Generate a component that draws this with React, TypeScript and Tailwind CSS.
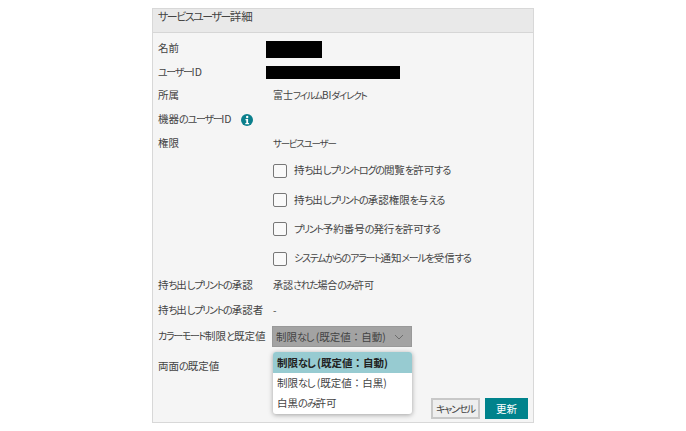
const font = "font-['Noto_Sans_CJK_JP','Noto_Sans',sans-serif] [font-feature-settings:'palt']";

function T({ children }: { children: string }) {
  const parts = children.split(/([\u30A0-\u30FF]+|[\u3040-\u309F]+|：)/).filter(Boolean);
  return (
    <>
      {parts.map((p, i) => {
        if (/^[\u30A0-\u30FF]/.test(p)) return <span key={i} className="text-[0.95em] tracking-[-0.13em]">{p}</span>;
        if (/^[\u3040-\u309F]/.test(p)) return <span key={i} className="text-[0.97em] tracking-[-0.11em]">{p}</span>;
        if (p === "：") return <span key={i} className="[font-feature-settings:normal]">{p}</span>;
        return <span key={i}>{p}</span>;
      })}
    </>
  );
}

function Row({ label, h, children }: { label: string; h: string; children?: React.ReactNode }) {
  return (
    <div className={`flex items-center ${h}`}>
      <div className="w-[115px] shrink-0 text-[10.5px] text-[#444] whitespace-nowrap -mt-[2px]"><T>{label}</T></div>
      <div className="flex items-center text-[10px] text-[#444] whitespace-nowrap">{children}</div>
    </div>
  );
}

function Check({ text, h }: { text: string; h: string }) {
  return (
    <div className={`flex items-center pl-[115px] ${h}`}>
      <span className="w-[14px] h-[14px] mr-[7px] rounded-[2px] border border-[#777] bg-[#f9f9f9] -mt-px" />
      <span className="text-[10.5px] text-[#444] whitespace-nowrap -mt-[2px]"><T>{text}</T></span>
    </div>
  );
}

export default function App() {
  return (
    <div className={`${font} w-[686px] h-[431px] bg-white overflow-hidden pt-2`}>
      <div className="relative mx-auto w-[382px] h-[415px] bg-[#f5f5f5] border border-[#d8d8d8] flex flex-col">
        <div className="h-[24px] shrink-0 bg-[#e9e9e9] border-b border-[#d6d6d6] pl-[5px] text-[11.5px] leading-[15px] text-[#444]">
          <T>サービスユーザー詳細</T>
        </div>
        <div className="pl-[5px] pt-[4px] flex flex-col">
          <Row label="名前" h="h-[24px]">
            <span className="w-[56px] h-[17px] bg-black -ml-[7px]" />
          </Row>
          <Row label="ユーザーID" h="h-[23px]">
            <span className="w-[134px] h-[13px] bg-black -ml-[7px]" />
          </Row>
          <Row label="所属" h="h-[24px]"><span className="-mt-[2px]"><T>富士フイルムBIダイレクト</T></span></Row>
          <div className="flex items-center h-[24px]">
            <span className="w-[83px] text-[10.5px] text-[#444] whitespace-nowrap -mt-[2px]"><T>機器のユーザーID</T></span>
            <svg className="w-[12px] h-[12px]" viewBox="0 0 12 12">
              <circle cx="6" cy="6" r="6" fill="#0a7f8c" />
              <circle cx="6.2" cy="3" r="1.2" fill="#fff" />
              <path d="M4.5 5h2.6v4h1v1.2H4.3V9h1V6.2h-.8z" fill="#fff" />
            </svg>
          </div>
          <Row label="権限" h="h-[24px]"><span className="-mt-[2px]"><T>サービスユーザー</T></span></Row>
          <Check text="持ち出しプリントログの閲覧を許可する" h="h-[30px]" />
          <Check text="持ち出しプリントの承認権限を与える" h="h-[29px]" />
          <Check text="プリント予約番号の発行を許可する" h="h-[29px]" />
          <Check text="システムからのアラート通知メールを受信する" h="h-[30px]" />
          <Row label="持ち出しプリントの承認" h="h-[24px]"><span className="-mt-[2px]"><T>承認された場合のみ許可</T></span></Row>
          <Row label="持ち出しプリントの承認者" h="h-[25px]"><span className="-mt-[2px]">-</span></Row>
          <Row label="カラーモード制限と既定値" h="h-[27px]">
            <div className="w-[140px] h-[21px] -ml-px bg-[#a3a3a3] border border-[#999] flex items-center justify-between pl-[3px] pr-[7px] text-[10.5px] text-[#444]">
              <span><T>制限なし (既定値：自動)</T></span>
              <svg className="w-[10px] h-[6px]" viewBox="0 0 10 6" fill="none" stroke="#666" strokeWidth="0.9">
                <path d="M1 1l4 4 4-4" />
              </svg>
            </div>
          </Row>
          <Row label="両面の既定値" h="h-[33px]" />
        </div>
        <div className="mt-auto mb-[3px] mr-[5px] flex justify-end gap-[5px]">
          <button className="w-[49px] h-[21px] bg-[#eee] border-2 border-[#c8c8c8] text-[10.5px] text-[#444] whitespace-nowrap"><T>キャンセル</T></button>
          <button className="w-[43px] h-[21px] bg-[#00838c] text-[10.5px] text-white">更新</button>
        </div>
        <div className="absolute left-[120px] top-[343px] w-[139px] h-[62px] bg-white rounded-[3px] shadow-[0_1px_5px_rgba(0,0,0,0.35)] text-[10.5px] text-[#444] flex flex-col">
          <div className="h-[21px] bg-[#97cbd1] rounded-t-[3px] pl-[4px] flex items-center font-bold text-[#222]"><span><T>制限なし (既定値：自動)</T></span></div>
          <div className="h-[20px] pl-[4px] flex items-center"><span><T>制限なし (既定値：白黒)</T></span></div>
          <div className="h-[20px] pl-[4px] flex items-center"><span><T>白黒のみ許可</T></span></div>
          <span className="absolute left-[65px] -top-[3px] w-[6px] h-[6px] bg-white rotate-45 -z-10" />
        </div>
      </div>
    </div>
  );
}
